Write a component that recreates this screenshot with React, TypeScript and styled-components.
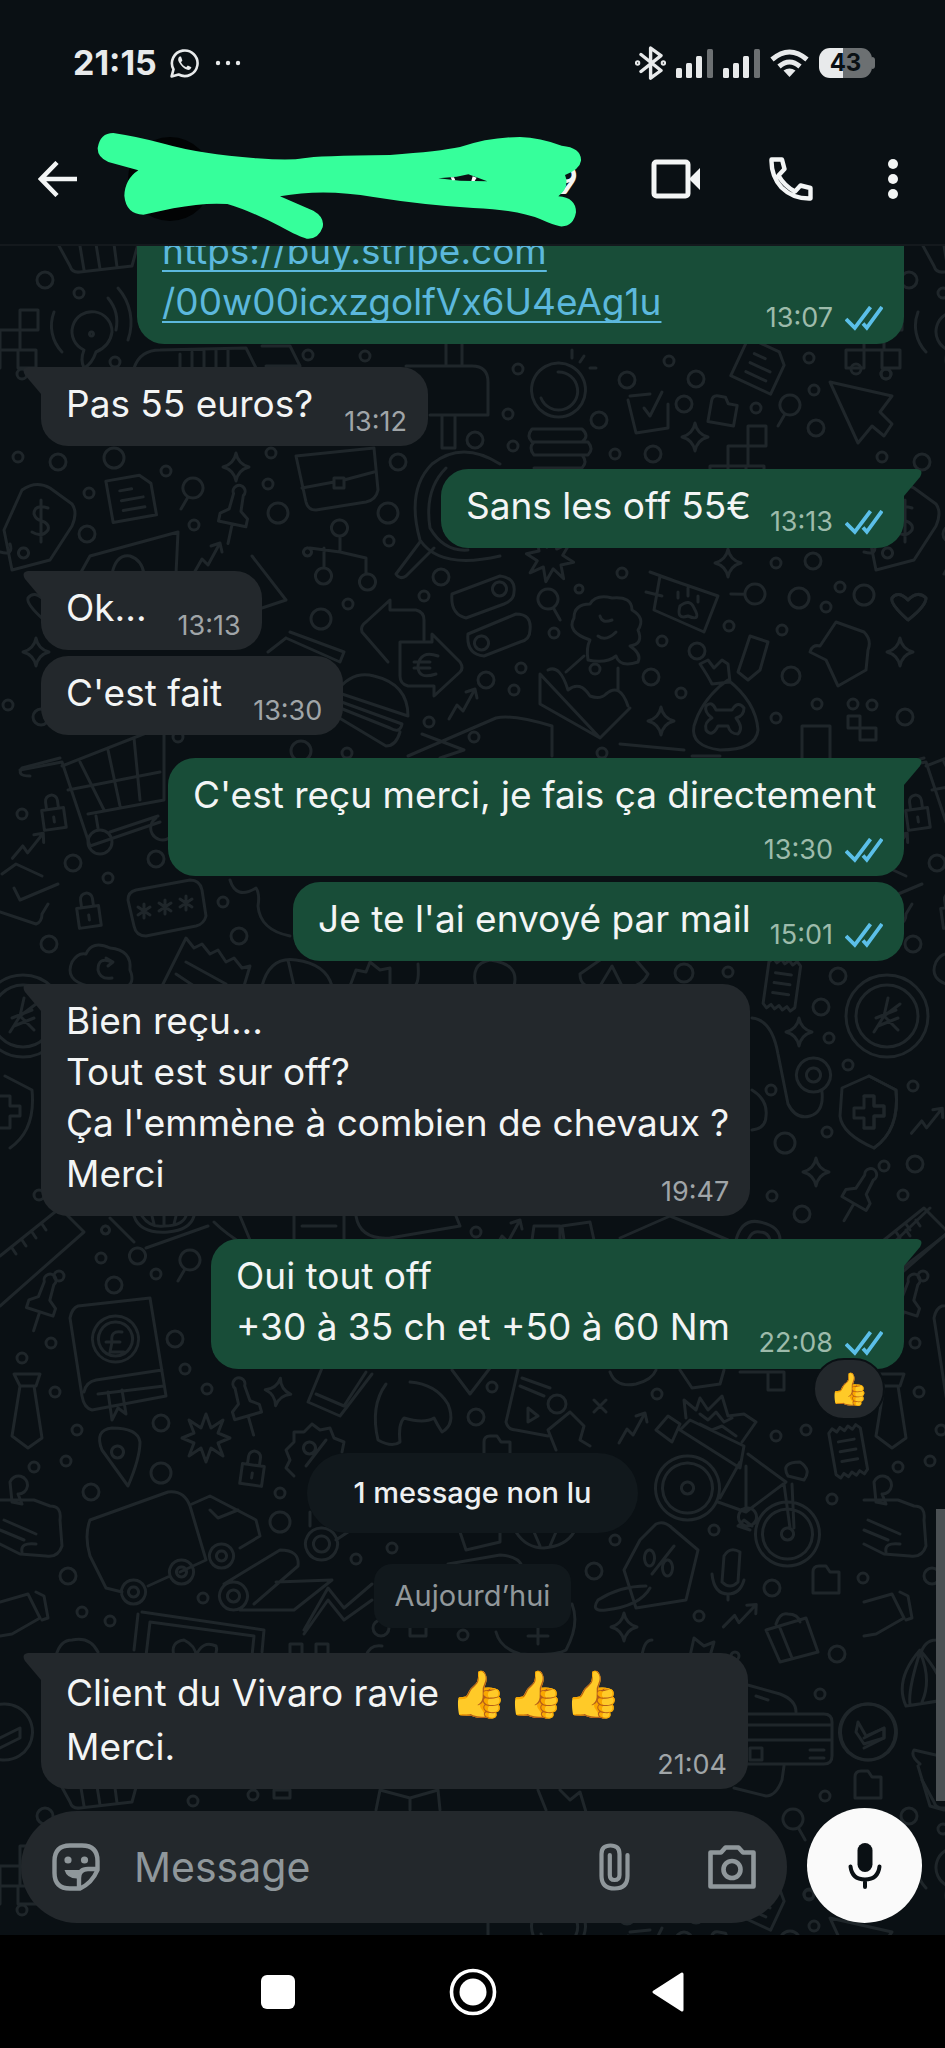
import React from "react";
import styled, { createGlobalStyle, css } from "styled-components";

const color = {
  bg: "#0a1014",
  incoming: "#23282c",
  outgoing: "#184d38",
  text: "#f3f5f5",
  mutedIn: "#a0a5a8",
  mutedOut: "#9dbbab",
  check: "#5bbfe8",
  link: "#5cb8dd",
  icon: "#8f979b",
  doodle: "#1f262a",
  marker: "#36ff9b",
};

const GlobalStyle = createGlobalStyle`
  *, *::before, *::after { box-sizing: border-box; }
  body {
    margin: 0;
    background: ${color.bg};
    color: ${color.text};
    font-family: Inter, "Noto Sans", sans-serif;
  }
  button {
    border: 0;
    padding: 0;
    background: none;
    color: inherit;
    font: inherit;
    cursor: pointer;
  }
  svg { display: block; flex: none; }
`;

/* ---------- shell ---------- */

const Screen = styled.div`
  display: flex;
  flex-direction: column;
  height: 100vh;
  min-height: 900px;
  overflow: hidden;
`;

const StatusBar = styled.div`
  display: flex;
  align-items: center;
  justify-content: space-between;
  height: 114px;
  padding: 12px 70px 0 73px;
  color: #e8eaeb;
`;

const StatusGroup = styled.div`
  display: flex;
  align-items: center;
  gap: 10px;
`;

const Clock = styled.time`
  margin-right: 3px;
  font-size: 34px;
  line-height: 40px;
  font-weight: 700;
`;

const Battery = styled.div`
  display: flex;
  align-items: center;
`;

const BatteryBody = styled.div`
  width: 53px;
  height: 30px;
  border-radius: 11px;
  background: linear-gradient(90deg, #e8eaeb 46%, #6c7072 46%);
  color: ${color.bg};
  font-size: 24px;
  line-height: 30px;
  font-weight: 700;
  text-align: center;
`;

const BatteryTip = styled.div`
  width: 3px;
  height: 12px;
  border-radius: 0 3px 3px 0;
  background: #6c7072;
`;

const Header = styled.header`
  display: flex;
  align-items: center;
  height: 132px;
  padding: 0 32px 0 28px;
  border-bottom: 2px solid #14191d;
`;

const IconButton = styled.button<{ $w?: number }>`
  display: grid;
  place-items: center;
  flex: none;
  width: ${(p) => p.$w ?? 60}px;
  height: 60px;
`;

const Contact = styled.div`
  position: relative;
  display: flex;
  align-items: center;
  flex: 1;
  margin-left: 40px;
`;

const Avatar = styled.div`
  width: 84px;
  height: 84px;
  border-radius: 50%;
  background: #020304;
`;

const ContactName = styled.h1`
  width: 366px;
  margin: 0;
  font-family: Lato, sans-serif;
  font-size: 38px;
  line-height: 46px;
  font-weight: 700;
  text-align: right;
`;

const Scribble = styled.svg`
  position: absolute;
  left: -38px;
  top: -18px;
`;

const Actions = styled.div`
  display: flex;
  gap: 52px;
`;

/* ---------- conversation ---------- */

const Chat = styled.main`
  position: relative;
  display: flex;
  flex-direction: column;
  flex: 1;
  min-height: 0;
  overflow: hidden;
`;

const Wallpaper = styled.svg`
  position: absolute;
  inset: 0;
  width: 100%;
  height: 100%;
`;

const Thread = styled.div`
  position: relative;
  display: flex;
  flex-direction: column;
  justify-content: flex-end;
  flex: 1;
  min-height: 0;
  padding: 0 41px;
`;

const Line = styled.p`
  margin: 0;
  font-size: 37px;
  line-height: 51px;
`;

const LastRow = styled.div`
  display: flex;
  align-items: flex-end;
  justify-content: space-between;
  min-height: 49px;

  ${Line} {
    padding-bottom: 10px;
  }
`;

const Bubble = styled.article<{ $out?: boolean; $tail?: boolean; $tall?: boolean; $min?: string }>`
  position: relative;
  flex: none;
  align-self: ${(p) => (p.$out ? "flex-end" : "flex-start")};
  min-width: ${(p) => p.$min ?? "0"};
  max-width: 92%;
  margin-top: ${(p) => (p.$tail ? 23 : 6)}px;
  padding: 11px 21px 7px 25px;
  border-radius: 27px;
  background: ${(p) => (p.$out ? color.outgoing : color.incoming)};
  ${(p) =>
    p.$tail &&
    (p.$out
      ? css`border-top-right-radius: 0;`
      : css`border-top-left-radius: 0;`)}
  ${(p) =>
    p.$tall &&
    css`
      padding-top: 13px;
      ${Line} {
        line-height: 54px;
      }
      ${LastRow} ${Line} {
        padding-bottom: 8px;
      }
    `}
`;

const Tail = styled.svg<{ $out?: boolean }>`
  position: absolute;
  top: 0;
  ${(p) => (p.$out ? "left: 100%;" : "right: 100%; transform: scaleX(-1);")}
`;

const Link = styled.a`
  color: ${color.link};
  text-decoration-thickness: 2px;
  text-underline-offset: 6px;
  text-decoration-skip-ink: none;
`;

const Meta = styled.div<{ $out?: boolean }>`
  display: flex;
  align-items: center;
  gap: 12px;
  margin-left: auto;
  padding-left: ${(p) => (p.$out ? 19 : 31)}px;
  padding-bottom: ${(p) => (p.$out ? 2 : 0)}px;
  color: ${(p) => (p.$out ? color.mutedOut : color.mutedIn)};
  font-size: 27px;
  line-height: 34px;
`;

const Emoji = styled.span`
  font-size: 46px;
  line-height: 1;
  vertical-align: -4px;
`;

const Reaction = styled.button`
  position: absolute;
  right: 19px;
  bottom: -51px;
  width: 72px;
  height: 62px;
  border: 2px solid ${color.bg};
  border-radius: 31px;
  background: ${color.incoming};
  font-size: 32px;
  line-height: 56px;
`;

const Notice = styled.div<{ $unread?: boolean }>`
  flex: none;
  align-self: center;
  background: #11181c;
  font-size: 29px;
  line-height: 40px;
  ${(p) =>
    p.$unread
      ? css`
          margin-top: 84px;
          padding: 20px 47px;
          border-radius: 40px;
          color: #eef0f1;
          font-weight: 500;
        `
      : css`
          margin: 31px 0 2px;
          padding: 12px 21px;
          border-radius: 18px;
          color: #92989b;
        `}
`;

const ScrollThumb = styled.div`
  position: absolute;
  right: 0;
  bottom: 134px;
  width: 9px;
  height: 292px;
  background: #4b5053;
`;

/* ---------- composer and navigation ---------- */

const Composer = styled.form`
  position: relative;
  display: flex;
  align-items: flex-end;
  gap: 20px;
  padding: 19px 23px 12px 21px;
`;

const Field = styled.div`
  display: flex;
  align-items: center;
  flex: 1;
  min-width: 0;
  height: 112px;
  padding: 0 31px;
  border-radius: 56px;
  background: ${color.incoming};
  color: ${color.icon};
`;

const FieldInput = styled.input`
  flex: 1;
  min-width: 0;
  height: 60px;
  margin-left: 34px;
  padding: 0;
  border: 0;
  outline: 0;
  background: none;
  color: ${color.text};
  font: 400 41px/60px Inter, "Noto Sans", sans-serif;

  &::placeholder {
    color: ${color.icon};
    opacity: 1;
  }
`;

const FieldActions = styled.div`
  display: flex;
  gap: 70px;
`;

const MicButton = styled.button`
  display: grid;
  place-items: center;
  flex: none;
  width: 115px;
  height: 115px;
  border-radius: 50%;
  background: #fafafa;
  color: ${color.bg};
`;

const NavBar = styled.nav`
  display: flex;
  align-items: center;
  justify-content: center;
  gap: 135px;
  height: 113px;
  background: #000;
`;

/* ---------- icons ---------- */

const Signal = () => (
  <svg width="37" height="29" viewBox="0 0 37 29" fill="currentColor">
    <rect x="0" y="19" width="6" height="10" rx="1.5" />
    <rect x="10" y="14" width="6" height="15" rx="1.5" />
    <rect x="20" y="7" width="6" height="22" rx="1.5" />
    <rect x="31" y="0" width="6" height="29" rx="1.5" fill="#6c7072" />
  </svg>
);

const Checks = () => (
  <svg width="38" height="25" viewBox="0 0 38 25" fill="none" stroke={color.check} strokeWidth="3.8">
    <path d="M1 13 9.8 21.8 25.5 1" />
    <path d="M18 17.6 21.8 21.8 37 1" />
  </svg>
);

/* ---------- wallpaper ---------- */

const TILE_W = 864;
const TILE_H = 1536;

const dots: [number, number, number][] = [
  [45, 280, 8], [79, 293, 5], [115, 362, 5], [308, 355, 5], [365, 356, 5], [22, 374, 5], [18, 457, 5], [58, 462, 8],
  [114, 458, 10], [166, 471, 5], [271, 453, 5], [398, 462, 8], [268, 484, 5], [89, 493, 5], [278, 513, 10],
  [388, 513, 10], [194, 525, 5], [87, 534, 8], [389, 541, 5], [475, 440, 8], [513, 446, 5], [508, 414, 5],
  [518, 369, 5], [627, 380, 8], [696, 379, 8], [669, 361, 5], [599, 420, 8], [684, 404, 8], [615, 454, 5],
  [653, 454, 8], [756, 408, 5], [814, 390, 5], [816, 428, 8], [809, 358, 5], [856, 369, 5], [886, 374, 5],
  [776, 563, 5], [813, 561, 8], [622, 573, 5], [441, 577, 8], [579, 589, 4], [424, 596, 5], [348, 604, 5],
  [321, 619, 10], [799, 598, 10], [840, 587, 5], [864, 595, 10], [826, 607, 5], [554, 633, 5], [662, 641, 5],
  [729, 626, 5], [782, 630, 5], [697, 651, 8], [521, 668, 5], [595, 669, 5], [651, 677, 8], [791, 676, 9],
  [486, 680, 8], [514, 690, 5], [681, 693, 5], [429, 722, 5], [776, 718, 5], [817, 704, 5], [853, 704, 5],
  [41, 717, 8], [474, 737, 5], [8, 705, 5], [178, 737, 5], [301, 751, 10], [347, 753, 5], [602, 753, 5],
  [22, 814, 5], [73, 863, 8], [156, 859, 8], [108, 878, 5], [223, 902, 5], [239, 936, 8], [49, 944, 8],
  [684, 973, 9], [728, 972, 5], [838, 976, 8], [821, 1007, 8], [829, 1038, 5], [848, 1065, 5], [771, 1090, 5],
  [785, 1143, 10], [827, 1132, 5], [49, 1086, 5], [884, 1166, 5], [772, 1196, 5], [802, 1214, 8], [39, 1195, 5],
  [51, 1164, 8], [59, 1276, 5], [114, 1285, 8], [156, 1274, 5], [101, 1258, 5], [175, 1339, 8], [51, 1343, 5],
  [22, 1358, 5], [185, 1369, 5], [207, 1389, 5], [55, 1392, 5], [161, 1423, 8], [77, 1430, 5], [476, 1417, 8],
  [492, 1387, 5], [557, 1404, 9], [657, 1394, 5], [66, 1461, 5], [34, 1467, 5], [161, 1473, 10], [91, 1492, 8],
  [280, 1493, 5], [280, 1522, 10], [392, 1548, 5], [356, 1559, 5], [68, 1576, 8], [203, 1598, 5], [110, 1621, 5],
  [82, 1612, 5], [615, 1540, 5], [594, 1571, 8], [714, 1530, 5], [776, 1436, 5], [806, 1430, 5], [832, 1499, 5],
  [772, 1588, 8], [863, 1578, 5], [699, 1616, 5], [476, 1232, 5], [463, 1635, 5], [381, 1628, 8], [837, 1654, 8],
  [820, 1694, 5], [825, 1796, 5], [735, 1656, 4], [253, 1795, 5], [193, 1801, 5], [809, 1895, 5],
];

type Glyph = "spark" | "lens" | "lock" | "page" | "pin" | "burst" | "zig" | "folder" | "slip" | "pixels";

const glyphs: Record<Glyph, string> = {
  spark: "M0-14Q2-3 13 0Q2 3 0 14Q-2 3-13 0Q-2-3 0-14Z",
  lens: "M0-10A10 10 0 1 1-.1-10ZM-5 9-12 21",
  lock: "M-11-3H11V17H-11ZM-6-3V-11A6 6 0 0 1 6-11V-3M0 5V10",
  page: "M-22-20H12L22-10V22H-22ZM-10-8H2M-10 2H12M-10 12H12",
  pin: "M-5-26A6 6 0 1 1 5-26L6-10 14-4V4H-14V-4L-6-10ZM0 4V24",
  burst: "M0-24 5-10 17-18 12-5 24 0 12 5 17 18 5 10 0 24-5 10-17 18-12 5-24 0-12-5-17-18-5-10Z",
  zig: "M-14 16-6 2 0 8 12-14M3-11 12-14 14-5",
  folder: "M-13-8Q-13-14-7-14H0L4-8H13V13H-13Z",
  slip: "M-18-20-14-24-10-20-6-24-2-20 2-24 6-20 10-24 14-20V22L10 26 6 22 2 26-2 22-6 26-10 22-14 26-18 22ZM-10-10H6M-10 0H6M-10 10H6",
  pixels: "M-20 0H0V20H-20ZM0-20H18V0H0ZM-38 20H-20V38H-38ZM-2 20H16V38H-2Z",
};

const placed: [Glyph, number, number, number][] = [
  ["spark", 236, 467, 0], ["spark", 695, 437, 0], ["spark", 728, 563, 0], ["spark", 36, 652, 0], ["spark", 661, 721, 0],
  ["spark", 799, 1032, 0], ["spark", 816, 1172, 0], ["spark", 278, 1392, 10], ["spark", 624, 1627, 0],
  ["lens", 193, 488, 0], ["lens", 790, 405, 0], ["lens", 548, 599, -60], ["lens", 755, 594, 60], ["lens", 190, 1260, 0],
  ["lens", 793, 1819, -60], ["lock", 53, 812, -8], ["lock", 88, 910, -8], ["lock", 253, 1468, 8],
  ["page", 131, 497, -10], ["page", 760, 365, 25], ["pin", 233, 520, 12], ["pin", 41, 1308, 18], ["pin", 247, 1412, -16],
  ["pin", 856, 1200, 30], ["burst", 206, 1438, 0], ["burst", 550, 558, 10], ["zig", 208, 557, 0], ["zig", 463, 703, 0],
  ["zig", 29, 845, 10], ["zig", 64, 1120, 10], ["zig", 633, 1427, 0], ["zig", 741, 1615, 15], ["zig", 508, 1234, 0],
  ["folder", 723, 411, 10], ["folder", 826, 1580, 0], ["folder", 868, 1785, 0], ["folder", 497, 1450, 0],
  ["slip", 784, 984, 8], ["slip", 850, 1450, -10], ["pixels", 748, 446, 0], ["pixels", 820, 790, 0],
  ["pixels", 20, 330, 0],
];

const drawings = [
  // shopping carts
  "M58 244 70 266Q72 273 80 272L132 266 138 244M80 246 84 270M96 244 100 269M114 244 117 267M20 770 62 762 90 846 160 822M62 766 164 726V800L88 814M80 762 104 810M108 750 120 806M134 738 140 800M68 790 160 772M96 816 98 828",
  "M112 842A12 12 0 1 1 88 842A12 12 0 1 1 112 842ZM174 824A12 12 0 1 1 156 818M110 832 158 816M30 776Q16 776 22 768L60 758",
  // radio waves
  "M112 332A20 20 0 1 0 84 350Q80 360 84 368 92 364 96 352 110 346 112 332ZM54 312A38 38 0 0 0 62 352M118 288A52 52 0 0 1 128 340M108 298A38 38 0 0 1 116 330M92 332A2 2 0 1 1 91 332",
  // keyboard, sign post and lamp
  "M134 368Q140 350 160 350L246 348 256 368M180 354V368M192 352V368M204 351V368M216 350V368M228 350V368M262 346H290L300 366H266",
  "M406 366H472Q488 366 488 382V415H430M442 415V448H455V415M446 342V366M462 342V366",
  "M558 363A27 27 0 1 0 559 363ZM558 372A19 19 0 1 1 541 398M572 350V358M584 356 580 362M590 368H596M532 429H582Q590 436 582 442H532Q526 436 532 429ZM534 442H588Q594 449 588 455H534Q528 448 534 442ZM534 455H582Q588 462 582 468H534",
  // check box
  "M630 396 650 394M668 404V428L636 433 628 400M644 408 650 416 662 392",
  // cursor
  "M830 382 892 396 880 412 892 424 884 436 872 426 858 443Z",
  // large lens
  "M500 464Q462 440 432 464 406 490 420 540 440 570 500 556M420 542 396 574Q400 580 406 576L434 548M446 468Q424 490 430 528 444 552 468 550",
  // briefcase
  "M296 456 374 448 378 490Q376 500 366 502L316 510Q308 510 306 502ZM302 488 334 482M344 480 374 472M334 478H344V488H334Z",
  // price tags
  "M4 530 22 490Q36 480 50 488L72 504Q78 512 72 526L50 560 12 570ZM48 508Q34 504 34 514 36 520 42 521 50 524 48 530 42 538 32 532M41 500V542M24 548A5 5 0 1 1 23 548M0 552Q14 556 10 544",
  "M640 1540 656 1524Q664 1520 672 1528L698 1550 686 1600 636 1608 624 1570ZM650 1550A5 8 0 1 1 649 1550M668 1560A5 8 0 1 1 667 1560M674 1546 652 1574M646 1586Q620 1586 598 1600 590 1612 606 1610 640 1606 650 1588",
  // bank note, hierarchy
  "M80 574 90 556 178 532 176 574M112 574Q116 554 130 556 142 560 144 574M252 556 286 600 262 608M340 520A8 8 0 1 1 339 520M340 536V552L310 548M340 552 366 558V574M324 548V568M308 548A4 4 0 1 1 307 548M324 568A8 8 0 1 1 323 568M368 574A8 8 0 1 1 367 574",
  // toggles
  "M452 594 500 576Q516 578 514 592 514 600 504 604L466 618Q450 614 452 594ZM500 582A7 7 0 1 1 499 582M468 634 516 614Q532 614 530 630 530 640 520 642L484 656Q466 654 468 634ZM482 636A7 7 0 1 1 481 636",
  // arrows
  "M388 662 362 632Q360 626 366 622L390 600V610H416Q424 612 424 620V640M400 642H432V634L460 662Q464 668 460 672L434 696V686H408Q400 684 400 676ZM438 656Q420 650 418 666 418 680 436 674M414 662H430M414 668H430",
  // tree in a box
  "M590 640Q566 632 574 618 574 604 590 604 596 594 612 598 632 596 632 610 646 618 638 630 644 644 630 646 642 654 638 662 620 668 616 656 606 664 588 660 586 648 590 640ZM600 616Q602 624 612 620M598 636Q606 642 616 632M584 656 566 672M618 668V690M540 674 600 738 630 708M540 674V704L600 738M548 670Q560 664 568 690 580 680 590 696 600 700 606 694 620 682 628 706",
  // paw banner
  "M660 576 718 596 704 632 654 610ZM650 572 672 580M646 592 662 596M680 606Q690 598 694 608 702 622 688 616 676 620 680 606ZM678 592V598M688 588V596M698 596V602",
  // heart
  "M908 620Q890 604 892 598 898 590 908 600 918 590 926 598 926 606 908 620Z",
  "M44 620Q26 604 28 598 34 590 44 600 54 590 62 598 62 606 44 620Z",
  // glove, vial
  "M836 622 864 632Q872 640 868 650L866 670 838 686 826 660 810 652Q812 644 820 646ZM750 636 768 642 760 670 748 680 738 672Z",
  // bone bag
  "M720 686Q700 704 694 726 690 746 720 750 756 750 758 730 756 702 728 680ZM700 664Q708 676 712 684L730 682 728 664 722 660 714 668 708 660ZM706 706Q712 700 716 710H732Q738 700 744 708 744 716 736 718 744 728 738 734 730 734 728 726H718Q712 738 706 730 704 722 712 718 704 712 706 706Z",
  // burger, ruler
  "M336 692Q352 670 374 676 408 684 408 716ZM336 700 402 724Q400 734 390 728L340 708M336 716 386 746Q396 746 400 732M290 632 344 652 340 662 286 638M268 652 286 638M408 756 496 718Q512 714 552 726V756M422 734 464 750 440 758M620 744 684 750M692 756H720M802 726H830V760H802ZM848 716H860V740H876V728H848Z",
  // password box
  "M136 890 190 880Q200 880 202 890L206 916Q204 924 196 926L146 936Q136 936 134 926L128 900Q128 892 136 890ZM144 904V918M138 907 150 915M150 907 138 915M165 900V914M159 903 171 911M171 903 159 911M186 896V910M180 899 192 907M192 899 180 907",
  // envelope
  "M2 874 16 864 42 876M14 888 20 900 58 884M0 912 36 924Q42 922 42 914L48 904",
  // cloud, ticket
  "M88 986Q64 980 72 962 78 952 86 954 92 940 110 948 132 950 130 970 136 984 124 988M112 962Q98 956 98 970 100 980 112 978M106 958 113 962 108 966",
  "M162 986 186 938 194 948 202 944 210 954 218 950 226 962 234 958 242 968 250 966 244 986M186 962 226 984M176 974 194 986M262 986Q270 956 296 960 326 964 332 986M288 960 294 986M350 986 356 970 366 972 370 962 380 970 390 968V986M410 986Q420 990 418 964M476 986Q470 964 490 960 520 964 514 986M580 974 600 960M636 960 648 974Q640 990 622 986L612 966 600 986Q580 990 580 974M230 880Q236 900 256 888 260 894 258 906 260 930 290 936",
  // coins
  "M64 1016A41 41 0 1 1-18 1016A41 41 0 1 1 64 1016ZM54 1016A31 31 0 1 1-8 1016A31 31 0 1 1 54 1016ZM24 998 20 1016 34 1030M36 1004 20 1016 10 1032M12 1018 32 1010M14 1026 34 1018",
  // shield
  "M869 1076 896 1090Q900 1130 874 1148 842 1134 840 1116L842 1088ZM864 1096H874V1106H884V1116H874V1128H864V1118H854V1108H864Z",
  "M5 1076 32 1090Q36 1130 10 1148M0 1096H10V1106H20V1116H10V1128H0",
  // stethoscope
  "M752 1018Q772 1020 778 1054L788 1104Q796 1120 810 1116 824 1112 822 1092M814 1058A17 17 0 1 1 813 1058ZM814 1068A7 7 0 1 1 813 1068M752 1090Q768 1100 766 1116 766 1128 752 1130",
  // rulers and gauges
  "M0 1256 60 1208 84 1232 0 1306M12 1248 16 1254M22 1240 26 1246M32 1232 36 1238M42 1224 46 1230M886 1250 930 1208M896 1240 900 1246M906 1230 910 1236M916 1220 920 1226M900 1270 944 1236",
  "M134 1216Q140 1234 168 1232 190 1230 194 1216M142 1216Q150 1228 164 1226 182 1226 186 1216M152 1216 154 1224M164 1216V1226M176 1216 174 1224M110 1218 134 1242M138 1248A8 8 0 1 1 137 1248ZM106 1226A4 4 0 1 1 105 1226M146 1248 208 1226M214 1222Q226 1234 246 1246M240 1216 250 1240M294 1216V1240M344 1216V1240M302 1226H336M356 1216Q360 1240 390 1238L460 1226 456 1216M532 1240 534 1226H560V1240M564 1240 562 1226 590 1222 594 1240M620 1238 670 1216 700 1228 728 1240M736 1240Q742 1218 760 1222 780 1226 780 1240M748 1240Q752 1230 760 1232 768 1232 770 1240",
  // pound book
  "M78 1306 150 1298 166 1396 92 1410Q84 1408 82 1396L70 1318Q72 1308 78 1306ZM116 1316A23 23 0 1 1 115 1316ZM116 1322A17 17 0 1 1 115 1322ZM122 1332Q110 1330 112 1342L110 1352H124M106 1342H120M84 1392Q86 1382 96 1380L162 1370M98 1394 164 1386M108 1392 112 1420 118 1408 126 1414 122 1390",
  // tie
  "M14 1374H40L36 1386H20ZM20 1386 12 1436 28 1448 42 1438 34 1386",
  // map pin
  "M128 1486 102 1450Q94 1430 112 1428 138 1428 140 1442 140 1458 128 1486ZM118 1446A6 6 0 1 1 117 1446Z",
  // percent badge
  "M312 1424 320 1430 330 1428 334 1438 344 1442 342 1452M312 1424 304 1432 294 1432 294 1442 286 1450 290 1460 286 1468 294 1476M310 1442A6 6 0 1 1 309 1442M326 1440 306 1466",
  // tablet, croissant
  "M322 1368 308 1402 340 1416 372 1374M316 1394 344 1406 366 1372M410 1382Q436 1384 448 1404 456 1424 442 1432 438 1426 434 1418 424 1424 404 1418 398 1424 400 1442 392 1448 378 1440 370 1406 386 1384 410 1382ZM396 1388Q392 1408 400 1420M424 1386Q426 1404 418 1418M388 1396Q380 1408 382 1424",
  // banner and music card
  "M452 1370 470 1394 490 1368M518 1370 506 1422Q508 1430 516 1430L548 1436M522 1378 550 1388M520 1386 544 1396M528 1408 538 1416 528 1422ZM570 1412 584 1426 580 1440 590 1446M570 1412 548 1430 556 1450M594 1400 606 1412M606 1400 594 1412M610 1372Q616 1388 636 1384 652 1380 656 1370M680 1370 692 1388 720 1384 724 1370M740 1372H784V1390H768V1372",
  // bicycle
  "M688 1456A32 32 0 1 1 687 1456ZM688 1463A25 25 0 1 1 687 1463ZM688 1482A6 6 0 1 1 687 1482ZM788 1502A32 32 0 1 1 787 1502ZM788 1509A25 25 0 1 1 787 1509ZM788 1528A6 6 0 1 1 787 1528ZM718 1502 746 1512 786 1482 748 1454M746 1466V1510M740 1462 720 1498M784 1484 790 1528M792 1484 794 1528M788 1476Q780 1462 800 1462 812 1470 804 1480ZM748 1508A9 9 0 1 1 747 1508ZM752 1526 744 1520 738 1526 750 1530M680 1430 740 1468 744 1446 690 1420ZM656 1430 668 1416 680 1424 672 1442ZM686 1418 684 1400 696 1410 700 1398 708 1410 722 1396 728 1416 744 1414 756 1422 742 1442M700 1414 708 1420 716 1412 724 1422 732 1418M700 1424 712 1430 722 1426 736 1436",
  // note pad
  "M0 1500H34L50 1506Q62 1506 60 1520L62 1546Q58 1558 46 1556L20 1554 0 1544M4 1520 36 1534M0 1530 24 1540M10 1482A9 9 0 1 1 18 1494L22 1504 12 1502ZM22 1552Q20 1542 36 1544",
  // van
  "M90 1520 168 1492Q184 1490 190 1506L206 1560 180 1572M90 1520Q84 1536 90 1556L106 1588 122 1592M192 1504 210 1496 256 1520 260 1536 240 1548M210 1510 218 1518 238 1510M134 1580A12 12 0 1 1 133 1580ZM134 1587A5 5 0 1 1 133 1587ZM182 1560A12 12 0 1 1 181 1560ZM182 1567A5 5 0 1 1 181 1567ZM222 1544A12 12 0 1 1 221 1544ZM222 1551A5 5 0 1 1 221 1551ZM148 1586 170 1576",
  // yoga mat, chart line
  "M234 1582A14 14 0 1 1 233 1582ZM234 1590A6 6 0 1 1 233 1590ZM224 1584 280 1550Q300 1550 298 1566L254 1604M276 1582 332 1580 294 1610 240 1610M304 1630 328 1588 344 1608 372 1584M304 1634 328 1600 344 1620 372 1600",
  "M322 1528A16 16 0 1 1 321 1528ZM322 1536A8 8 0 1 1 321 1536ZM310 1512V1526M336 1540 348 1532",
  "M460 1532 466 1550 500 1542V1532M516 1532Q526 1548 544 1548 566 1546 574 1532M534 1532 540 1546M556 1532 550 1546M448 1564 500 1555Q518 1556 522 1566",
  // microphone
  "M724 1556Q730 1546 740 1552L738 1582Q730 1590 722 1582ZM712 1574Q714 1594 728 1594 740 1594 744 1580M728 1594V1600",
  // laptop, camera, gift bags
  "M142 1612 264 1630 262 1652M134 1650 138 1614M146 1656 150 1622 254 1636 252 1656M174 1656Q170 1642 184 1640 196 1646 196 1656M196 1656Q202 1640 216 1646 218 1652 214 1656M0 1602 28 1594 40 1618 12 1634 0 1636M36 1592 44 1596 48 1618 42 1620M56 1656Q60 1640 72 1640 90 1636 98 1652M290 1656V1644H302V1656M316 1656V1644H328V1656M366 1656Q370 1644 382 1646M410 1618H426V1636H410Z",
  "M766 1630 806 1618 818 1652 780 1662ZM776 1624Q780 1612 788 1614 798 1614 800 1622M780 1628 792 1658M642 1656Q644 1640 652 1640M690 1656 694 1638 704 1646 714 1642 710 1656M496 1632Q500 1648 520 1654 556 1656 566 1650 580 1624 572 1604M528 1636H548M538 1628V1644",
  // garlic and leaf
  "M906 1706Q894 1680 920 1650 946 1680 944 1700 920 1704 906 1706ZM920 1652Q908 1690 910 1704M920 1652Q932 1680 922 1702",
  // credit cards, clock
  "M744 1684 780 1694Q796 1700 796 1712M756 1696 768 1700M744 1714H824Q832 1714 832 1722V1756Q832 1764 824 1764H744M744 1725H832M744 1740H832M750 1748H762V1760H750ZM810 1750H824M810 1758H824M784 1766 782 1780Q776 1796 766 1796L734 1788M868 1704A28 28 0 1 1 867 1704ZM858 1722 866 1736 884 1728 884 1738 864 1744 856 1732Z",
  "M5 1704A28 28 0 1 1 4 1704ZM0 1738 20 1728V1738L0 1748",
  // shelf fragments
  "M376 1810 380 1790 410 1798 438 1790 440 1810M410 1798V1810M538 1790 546 1810M560 1790 570 1800 580 1792 586 1812M274 1790H290V1798H274ZM920 1764Q910 1756 914 1750L940 1756M918 1766 930 1806 944 1810",
];

const WallpaperTile = () => (
  <g id="tile">
    {dots.map(([x, y, r]) => (
      <circle key={`${x}-${y}`} cx={x} cy={y} r={r} />
    ))}
    {placed.map(([name, x, y, turn]) => (
      <path key={`${name}-${x}-${y}`} d={glyphs[name]} transform={`translate(${x} ${y}) rotate(${turn})`} />
    ))}
    {drawings.map((d) => (
      <path key={d.slice(0, 24)} d={d} />
    ))}
  </g>
);

const ChatWallpaper = () => (
  <Wallpaper aria-hidden="true" fill="none" stroke={color.doodle} strokeWidth="3" strokeLinecap="round" strokeLinejoin="round">
    <g transform="translate(0 -246)">
      <WallpaperTile />
      <use href="#tile" x={TILE_W} />
      <use href="#tile" y={TILE_H} />
      <use href="#tile" x={TILE_W} y={TILE_H} />
    </g>
  </Wallpaper>
);

/* ---------- messages ---------- */

type MessageProps = {
  out?: boolean;
  tail?: boolean;
  time: string;
  lines?: React.ReactNode[];
  last?: React.ReactNode;
  min?: string;
  tall?: boolean;
  children?: React.ReactNode;
};

const Message = ({ out, tail, time, lines = [], last, min, tall, children }: MessageProps) => (
  <Bubble $out={out} $tail={tail} $tall={tall} $min={min}>
    {tail && (
      <Tail $out={out} width="18" height="28" viewBox="0 0 18 28">
        <path d="M-1 0H13Q20 1 16 8L0 27H-1Z" fill={out ? color.outgoing : color.incoming} />
      </Tail>
    )}
    {lines.map((line, i) => (
      <Line key={i}>{line}</Line>
    ))}
    <LastRow>
      {last && <Line>{last}</Line>}
      <Meta $out={out}>
        <time>{time}</time>
        {out && <Checks />}
      </Meta>
    </LastRow>
    {children}
  </Bubble>
);

export default function App() {
  return (
    <>
      <GlobalStyle />
      <Screen>
        <StatusBar>
          <StatusGroup>
            <Clock>21:15</Clock>
            <svg width="29" height="29" viewBox="0 0 29 29" fill="none" stroke="currentColor" strokeWidth="2.6">
              <path d="M1.6 27.4 3.5 20.4A12.8 12.8 0 1 1 8.6 25.5Z" strokeLinejoin="round" />
              <path
                d="M9.6 7.4C8 8.6 7.6 10.6 9 13.3C11 17 14 19.8 17.4 20.8C19.4 21.2 21 20 21.4 18.2L17.8 16.4 16.2 18.2C13.8 17.2 12 15.4 11 13.2L12.4 11.6 11 7.6Z"
                fill="currentColor"
                stroke="none"
              />
            </svg>
            <svg width="32" height="6" viewBox="0 0 32 6" fill="currentColor">
              <circle cx="9" cy="3" r="2.2" />
              <circle cx="19" cy="3" r="2.2" />
              <circle cx="29" cy="3" r="2.2" />
            </svg>
          </StatusGroup>
          <StatusGroup>
            <svg width="31" height="34" viewBox="0 0 31 34" fill="none" stroke="currentColor" strokeWidth="3.4" strokeLinejoin="round" strokeLinecap="round">
              <path d="M6 8.5 26 24.5 15.6 32.2V2L26 9.6 6 25.5" />
              <circle cx="2.6" cy="17" r="1" />
              <circle cx="28.4" cy="17" r="1" />
            </svg>
            <Signal />
            <Signal />
            <svg width="39" height="28" viewBox="0 0 39 28" fill="none" stroke="currentColor" strokeWidth="5">
              <path d="M2 10.5Q19.5-4.5 37 10.5" />
              <path d="M9 17.5Q19.5 8.5 30 17.5" />
              <path d="M13.5 21.5Q19.5 17.5 25.5 21.5L19.5 28Z" fill="currentColor" stroke="none" />
            </svg>
            <Battery>
              <BatteryBody>43</BatteryBody>
              <BatteryTip />
            </Battery>
          </StatusGroup>
        </StatusBar>

        <Header>
          <IconButton aria-label="Retour">
            <svg width="40" height="36" viewBox="0 0 40 36" fill="none" stroke="currentColor" strokeWidth="4.5">
              <path d="M19 1.5 3 18 19 34.5M3 18H39" />
            </svg>
          </IconButton>
          <Contact>
            <Avatar />
            <ContactName>9</ContactName>
            <Scribble width="500" height="124" viewBox="0 0 1500 372" aria-hidden="true">
              <path
                fill={color.marker}
                d="M70 42Q140 52 225 75Q330 105 500 118Q600 125 640 118Q680 110 900 108Q1050 97 1110 84Q1200 54 1290 54Q1350 56 1415 80Q1475 86 1473 125Q1470 150 1425 168Q1440 205 1405 232Q1458 236 1458 280Q1450 325 1410 322Q1390 318 1350 300Q1280 272 1150 267Q1000 258 850 234Q700 208 570 232L670 275Q705 295 698 325Q685 362 650 359Q630 355 570 322Q480 275 412 255Q340 250 250 268L160 287Q108 285 103 230Q105 180 145 154L55 129Q22 115 23 87Q30 42 70 42Z"
              />
              <path d="M1045 178 1100 173 1135 166 1192 187 1110 185Z" fill={color.bg} />
              <path d="M1082 175H1092L1096 184H1086ZM1148 172 1160 176 1154 186H1144Z" fill="#fff" />
            </Scribble>
          </Contact>
          <Actions>
            <IconButton $w={66} aria-label="Appel vidéo">
              <svg width="50" height="40" viewBox="0 0 50 40" fill="none" stroke="currentColor" strokeWidth="5">
                <rect x="3" y="3" width="34" height="34" rx="2.5" />
                <path d="M38 20 49 9V31Z" fill="currentColor" stroke="none" />
              </svg>
            </IconButton>
            <IconButton aria-label="Appel vocal">
              <svg width="44" height="44" viewBox="0 0 44 44" fill="none" stroke="currentColor" strokeWidth="4.4" strokeLinejoin="round">
                <path d="M2.5 2.5H13L15.5 12 9.5 18.5Q15.5 29 26 34.5L31.5 28.5 41.5 31V41.5Q24 42 12.5 30.5Q2 19 2.5 2.5Z" />
              </svg>
            </IconButton>
            <IconButton $w={40} aria-label="Plus d'options">
              <svg width="10" height="40" viewBox="0 0 10 40" fill="currentColor">
                <circle cx="5" cy="5" r="5" />
                <circle cx="5" cy="20" r="5" />
                <circle cx="5" cy="35" r="5" />
              </svg>
            </IconButton>
          </Actions>
        </Header>

        <Chat>
          <ChatWallpaper />
          <Thread>
            <Message
              out
              time="13:07"
              min="767px"
              lines={[<Link key="a" href="#pay">https://buy.stripe.com</Link>]}
              last={<Link href="#pay">/00w00icxzgolfVx6U4eAg1u</Link>}
            />
            <Message tail time="13:12" last="Pas 55 euros?" />
            <Message out tail time="13:13" last="Sans les off 55€" />
            <Message tail time="13:13" last="Ok..." />
            <Message time="13:30" last="C'est fait" />
            <Message out tail time="13:30" min="736px" lines={["C'est reçu merci, je fais ça directement"]} />
            <Message out time="15:01" last="Je te l'ai envoyé par mail" />
            <Message
              tail
              time="19:47"
              lines={["Bien reçu...", "Tout est sur off?", "Ça l'emmène à combien de chevaux ?"]}
              last="Merci"
            />
            <Message out tail time="22:08" min="693px" lines={["Oui tout off"]} last="+30 à 35 ch et +50 à 60 Nm">
              <Reaction aria-label="Réaction">👍</Reaction>
            </Message>
            <Notice $unread>1 message non lu</Notice>
            <Notice>Aujourd’hui</Notice>
            <Message
              tail
              tall
              time="21:04"
              min="707px"
              lines={[<React.Fragment key="a">Client du Vivaro ravie <Emoji>👍👍👍</Emoji></React.Fragment>]}
              last="Merci."
            />
          </Thread>
          <Composer onSubmit={(e) => e.preventDefault()}>
            <Field>
              <IconButton $w={48} type="button" aria-label="Stickers">
                <svg width="48" height="48" viewBox="0 0 48 48" fill="none" stroke="currentColor" strokeWidth="4.4" strokeLinejoin="round">
                  <path d="M18 2.5H30Q45.5 2.5 45.5 18V27Q40 40 28 45.5H18Q2.5 45.5 2.5 30V18Q2.5 2.5 18 2.5Z" />
                  <path d="M45.500 26H36Q27 26 27 35V45" />
                  <path d="M12.5 27H30Q26 30 26 35.5Q15 36 12.5 27Z" fill="currentColor" stroke="none" />
                  <circle cx="16" cy="17" r="3.6" fill="currentColor" stroke="none" />
                  <circle cx="32.5" cy="17" r="3.6" fill="currentColor" stroke="none" />
                </svg>
              </IconButton>
              <FieldInput aria-label="Message" placeholder="Message" />
              <FieldActions>
                <IconButton $w={48} type="button" aria-label="Joindre">
                  <svg width="31" height="48" viewBox="0 0 31 48" fill="none" stroke="currentColor" strokeWidth="4.2" strokeLinecap="round">
                    <path d="M28.5 12V33Q28.5 45.5 15.5 45.5Q2.5 45.5 2.5 33V11Q2.5 2.5 11.5 2.5Q20.5 2.5 20.5 11V32Q20.5 37 15.5 37Q10.8 37 10.8 32V12" />
                  </svg>
                </IconButton>
                <IconButton $w={48} type="button" aria-label="Appareil photo">
                  <svg width="48" height="44" viewBox="0 0 48 44" fill="none" stroke="currentColor" strokeWidth="4.6" strokeLinejoin="round">
                    <path d="M2.5 7.5H13L17.5 2.5H30.5L35 7.5H45.5V41.5H2.5Z" />
                    <circle cx="24" cy="24.5" r="8.5" />
                  </svg>
                </IconButton>
              </FieldActions>
            </Field>
            <MicButton type="button" aria-label="Message vocal">
              <svg width="34" height="46" viewBox="0 0 34 46" fill="none" stroke="currentColor" strokeWidth="4" strokeLinecap="round">
                <rect x="9.5" y="0" width="15" height="29" rx="7.5" fill="currentColor" stroke="none" />
                <path d="M2.5 23.5Q4 36.5 17 36.5Q30 36.5 31.5 23.5M17 37V44" />
              </svg>
            </MicButton>
          </Composer>
          <ScrollThumb />
        </Chat>

        <NavBar aria-label="Système">
          <IconButton aria-label="Applications récentes">
            <svg width="34" height="34" viewBox="0 0 34 34">
              <rect width="34" height="34" rx="6" fill="#fff" />
            </svg>
          </IconButton>
          <IconButton aria-label="Accueil">
            <svg width="48" height="48" viewBox="0 0 48 48">
              <circle cx="24" cy="24" r="21.5" fill="none" stroke="#fff" strokeWidth="3.6" />
              <circle cx="24" cy="24" r="13.5" fill="#fff" />
            </svg>
          </IconButton>
          <IconButton aria-label="Précédent">
            <svg width="34" height="40" viewBox="0 0 34 40">
              <path d="M31 2V38L3 20Z" fill="#fff" stroke="#fff" strokeWidth="3" strokeLinejoin="round" />
            </svg>
          </IconButton>
        </NavBar>
      </Screen>
    </>
  );
}
